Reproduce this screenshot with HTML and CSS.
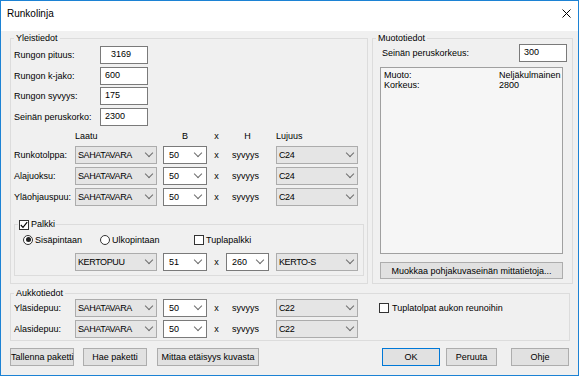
FILE: index.html
```html
<!DOCTYPE html>
<html lang="fi">
<head>
    <meta charset="UTF-8">
    <meta name="viewport" content="width=device-width, initial-scale=1.0">
    <title>Runkolinja</title>
    <link rel="stylesheet" href="styles.css">
</head>
<body>
    <div class="window">
        <div class="titlebar">
            <span class="title">Runkolinja</span>
            <svg class="close" width="9" height="9" viewBox="0 0 9 9">
                <path d="M0.5 0.5L8.5 8.5M8.5 0.5L0.5 8.5" stroke="#000" stroke-width="1"/>
            </svg>
        </div>

        <div class="content">
            <div class="top">
                <fieldset class="group general">
                    <legend>Yleistiedot</legend>

                    <div class="fields">
                        <div class="field"><label>Rungon pituus:</label><div class="txt txt-static">3169</div></div>
                        <div class="field"><label>Rungon k-jako:</label><div class="txt">600</div></div>
                        <div class="field"><label>Rungon syvyys:</label><div class="txt">175</div></div>
                        <div class="field"><label>Seinän peruskorko:</label><div class="txt">2300</div></div>
                    </div>

                    <div class="grid head">
                        <span></span>
                        <span>Laatu</span>
                        <span class="center">B</span>
                        <span class="center">x</span>
                        <span class="h-col">H</span>
                        <span>Lujuus</span>
                    </div>

                    <div class="rows">
                        <div class="grid">
                            <label>Runkotolppa:</label>
                            <div class="cmb list wide"><span>SAHATAVARA</span></div>
                            <div class="cmb edit"><span>50</span></div>
                            <span class="center">x</span>
                            <span class="depth">syvyys</span>
                            <div class="cmb list wide"><span>C24</span></div>
                        </div>
                        <div class="grid">
                            <label>Alajuoksu:</label>
                            <div class="cmb list wide"><span>SAHATAVARA</span></div>
                            <div class="cmb edit"><span>50</span></div>
                            <span class="center">x</span>
                            <span class="depth">syvyys</span>
                            <div class="cmb list wide"><span>C24</span></div>
                        </div>
                        <div class="grid">
                            <label>Yläohjauspuu:</label>
                            <div class="cmb list wide"><span>SAHATAVARA</span></div>
                            <div class="cmb edit"><span>50</span></div>
                            <span class="center">x</span>
                            <span class="depth">syvyys</span>
                            <div class="cmb list wide"><span>C24</span></div>
                        </div>
                    </div>

                    <fieldset class="group beam">
                        <legend class="check-legend">
                            <span class="chk checked">
                                <svg width="8" height="8" viewBox="0 0 8 8"><path d="M0.8 4L3 6.3L7.2 1.2" fill="none" stroke="#000" stroke-width="1.1"/></svg>
                            </span>
                            <span>Palkki</span>
                        </legend>

                        <div class="options">
                            <div class="opt opt-in"><span class="radio on"></span><span>Sisäpintaan</span></div>
                            <div class="opt opt-out"><span class="radio"></span><span>Ulkopintaan</span></div>
                            <div class="opt"><span class="chk"></span><span>Tuplapalkki</span></div>
                        </div>

                        <div class="grid beam-row">
                            <span></span>
                            <div class="cmb list wide"><span>KERTOPUU</span></div>
                            <div class="cmb edit"><span>51</span></div>
                            <span class="center">x</span>
                            <div class="cmb edit h-cmb"><span>260</span></div>
                            <div class="cmb list wide"><span>KERTO-S</span></div>
                        </div>
                    </fieldset>
                </fieldset>

                <fieldset class="group shape">
                    <legend>Muototiedot</legend>

                    <div class="shape-field">
                        <label>Seinän peruskorkeus:</label>
                        <div class="txt">300</div>
                    </div>

                    <div class="listbox">
                        <div class="list-line"><span>Muoto:</span><span>Neljäkulmainen</span></div>
                        <div class="list-line"><span>Korkeus:</span><span>2800</span></div>
                    </div>

                    <button class="btn edit-btn">Muokkaa pohjakuvaseinän mittatietoja...</button>
                </fieldset>
            </div>

            <fieldset class="group opening">
                <legend>Aukkotiedot</legend>
                <div class="opening-body">
                    <div class="rows opening-rows">
                        <div class="grid">
                            <label>Yläsidepuu:</label>
                            <div class="cmb list wide"><span>SAHATAVARA</span></div>
                            <div class="cmb edit"><span>50</span></div>
                            <span class="center">x</span>
                            <span class="depth">syvyys</span>
                            <div class="cmb list wide"><span>C22</span></div>
                        </div>
                        <div class="grid">
                            <label>Alasidepuu:</label>
                            <div class="cmb list wide"><span>SAHATAVARA</span></div>
                            <div class="cmb edit"><span>50</span></div>
                            <span class="center">x</span>
                            <span class="depth">syvyys</span>
                            <div class="cmb list wide"><span>C22</span></div>
                        </div>
                    </div>
                    <div class="opt double-studs"><span class="chk"></span><span>Tuplatolpat aukon reunoihin</span></div>
                </div>
            </fieldset>

            <div class="buttons">
                <div class="btn-group left">
                    <button class="btn btn-save">Tallenna paketti</button>
                    <button class="btn btn-load">Hae paketti</button>
                    <button class="btn btn-measure">Mittaa etäisyys kuvasta</button>
                </div>
                <div class="btn-group right">
                    <button class="btn btn-ok">OK</button>
                    <button class="btn btn-cancel">Peruuta</button>
                    <button class="btn btn-help">Ohje</button>
                </div>
            </div>
        </div>
    </div>
</body>
</html>
```

FILE: styles.css
```css
* {
    margin: 0;
    padding: 0;
    box-sizing: border-box;
}

body {
    font-family: "Liberation Sans", Arial, sans-serif;
    font-size: 9px;
    color: #000;
    background: #fff;
}

.window {
    width: 579px;
    height: 376px;
    border: 1px solid #1c82d4;
    background: #f0f0f0;
}

/* Title bar */
.titlebar {
    height: 30px;
    background: #fff;
    display: flex;
    align-items: center;
    justify-content: space-between;
    padding: 0 7px 6px 6px;
}

.title {
    font-size: 10px;
}

.close {
    display: block;
}

.content {
    padding: 2px 5px 0 9px;
}

.top {
    display: flex;
    gap: 4px;
}

/* Group boxes */
fieldset.group {
    border: 1px solid #dcdcdc;
    min-width: 0;
}

legend {
    margin-left: 3px;
    padding: 0 2px;
    line-height: 11px;
}

.general {
    width: 358px;
    padding-bottom: 7px;
}

.shape {
    flex: 1;
}

/* Text boxes */
.fields {
    padding: 2px 0 0 3px;
    display: flex;
    flex-direction: column;
    gap: 2.5px;
}

.field {
    display: flex;
    align-items: center;
    height: 18px;
}

.field label {
    width: 86px;
}

.txt {
    width: 48px;
    height: 18px;
    border: 1px solid #7a7a7a;
    background: #fff;
    padding-left: 4px;
    line-height: 15px;
}

.txt-static {
    padding-left: 10px;
}

/* Combo rows */
.grid {
    display: grid;
    grid-template-columns: 61px 88px 44px 19px 50px 82px;
    align-items: center;
    height: 18px;
}

.head {
    height: 11px;
    line-height: 11px;
    margin-top: 5.5px;
    padding-left: 3px;
}

.center {
    text-align: center;
}

.h-col {
    width: 43px;
    text-align: center;
}

.depth {
    padding-left: 6px;
}

.rows {
    display: flex;
    flex-direction: column;
    gap: 3.3px;
    margin-top: 3.5px;
    padding-left: 3px;
}

.cmb {
    display: flex;
    align-items: center;
    height: 18px;
    width: 44px;
    border: 1px solid #7a7a7a;
    background: #fff;
    padding-left: 5px;
}

.cmb span {
    flex: 1;
    white-space: nowrap;
}

.cmb::after {
    content: "";
    width: 5px;
    height: 5px;
    border-right: 1px solid #6d6d6d;
    border-bottom: 1px solid #6d6d6d;
    transform: rotate(45deg);
    margin: -4px 5px 0 0;
}

.cmb.list {
    background: #e5e5e5;
    border-color: #acacac;
    padding-left: 2px;
}

.cmb.list span {
    letter-spacing: -0.4px;
}

.cmb.list::after {
    margin-right: 4px;
}

.cmb.wide {
    width: 82px;
}

.h-cmb {
    width: 43px;
}

/* Palkki */
.beam {
    margin: 13.4px 3px 0 3px;
    padding-bottom: 4px;
}

.check-legend {
    display: flex;
    align-items: center;
    gap: 2px;
    margin-left: 3px;
    padding: 0 1px;
}

.chk {
    width: 10px;
    height: 10px;
    border: 1px solid #333;
    background: #fff;
    display: flex;
    align-items: center;
    justify-content: center;
    flex-shrink: 0;
}

.chk svg {
    display: block;
}

.radio {
    width: 10px;
    height: 10px;
    border: 1px solid #333;
    border-radius: 50%;
    background: #fff;
    display: flex;
    align-items: center;
    justify-content: center;
    flex-shrink: 0;
}

.radio.on::after {
    content: "";
    width: 5px;
    height: 5px;
    border-radius: 50%;
    background: #222;
}

.options {
    display: flex;
    align-items: center;
    height: 12px;
    margin-top: 3.5px;
    padding-left: 8px;
}

.opt {
    display: flex;
    align-items: center;
    gap: 2px;
}

.opt-in {
    width: 77px;
}

.opt-out {
    width: 94px;
}

.beam-row {
    grid-template-columns: 60px 88px 44px 19px 50px 82px;
    margin-top: 7px;
}

/* Muototiedot */
.shape-field {
    display: flex;
    align-items: center;
    justify-content: space-between;
    height: 18px;
    padding: 0 5px 0 9px;
}

.listbox {
    width: 183px;
    height: 187px;
    margin: 5px 0 0 7px;
    border: 1px solid #a0a0a0;
    background: #f6f6f6;
    padding: 3px 3px 0 3px;
}

.list-line {
    display: grid;
    grid-template-columns: 115px 1fr;
    line-height: 9.5px;
}

.btn {
    font-family: inherit;
    font-size: 9px;
    color: #000;
    height: 18px;
    background: #e1e1e1;
    border: 1px solid #adadad;
    white-space: nowrap;
}

.edit-btn {
    display: block;
    width: 183px;
    height: 17px;
    margin: 8px 0 4px 7px;
}

/* Aukkotiedot */
.opening {
    width: 560px;
    margin-top: 4px;
}

.opening-body {
    display: flex;
    padding: 0 0 2px 3px;
}

.opening-rows {
    margin-top: 0;
    padding-left: 0;
    gap: 3px;
}

.double-studs {
    height: 18px;
    margin-left: 21px;
    gap: 3px;
}

/* Bottom buttons */
.buttons {
    display: flex;
    justify-content: space-between;
    margin-top: 7px;
    padding-right: 4px;
}

.btn-group {
    display: flex;
}

.btn-save { width: 64px; }
.btn-load { width: 64px; margin-left: 9px; }
.btn-measure { width: 102px; margin-left: 10px; }

.btn-ok {
    width: 58px;
    border-color: #0078d7;
}

.btn-cancel { width: 51px; margin-left: 6px; }
.btn-help { width: 58px; margin-left: 14px; }
```
